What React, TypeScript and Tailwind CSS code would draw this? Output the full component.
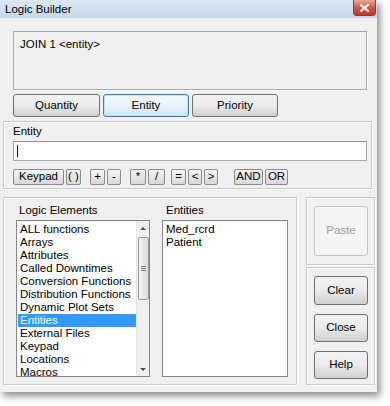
import React from "react";

const logicItems = [
  "ALL functions",
  "Arrays",
  "Attributes",
  "Called Downtimes",
  "Conversion Functions",
  "Distribution Functions",
  "Dynamic Plot Sets",
  "Entities",
  "External Files",
  "Keypad",
  "Locations",
  "Macros",
];

const entityItems = ["Med_rcrd", "Patient"];

// small keypad buttons: label, width, left gap
const keys: { label: string; w: string; ml: string }[] = [
  { label: "Keypad", w: "w-[51px]", ml: "ml-0" },
  { label: "( )", w: "w-[15px]", ml: "ml-[2px]" },
  { label: "+", w: "w-[15px]", ml: "ml-[9px]" },
  { label: "-", w: "w-[14px]", ml: "ml-[2px]" },
  { label: "*", w: "w-[16px]", ml: "ml-[9px]" },
  { label: "/", w: "w-[17px]", ml: "ml-[2px]" },
  { label: "=", w: "w-[15px]", ml: "ml-[6px]" },
  { label: "<", w: "w-[14px]", ml: "ml-[2px]" },
  { label: ">", w: "w-[14px]", ml: "ml-[2px]" },
  { label: "AND", w: "w-[29px]", ml: "ml-[16px]" },
  { label: "OR", w: "w-[23px]", ml: "ml-[2px]" },
];

const btn =
  "flex items-center justify-center border border-[#707070] rounded-[3px] bg-gradient-to-b from-[#f2f2f2] via-[#ebebeb] to-[#cfcfcf] text-black";

const etched = "border border-[#c9c9c9] shadow-[inset_1px_1px_0_#ffffff,1px_1px_0_#ffffff]";

function ScrollBar() {
  return (
    <div className="w-[13px] h-full flex flex-col items-center bg-[#f0f0f0] border-l border-[#e6e6e6]">
      <div className="h-[14px] w-full flex items-center justify-center">
        <div className="w-0 h-0 border-l-[3px] border-r-[3px] border-b-[3px] border-l-transparent border-r-transparent border-b-[#4d4d4d]" />
      </div>
      <div className="mt-[2px] h-[63px] w-[11px] rounded-[2px] border border-[#9a9a9a] bg-gradient-to-r from-[#f4f4f4] to-[#dcdcdc] flex flex-col items-center justify-center gap-[1px]">
        <div className="w-[5px] h-px bg-[#7a7a7a]" />
        <div className="w-[5px] h-px bg-[#7a7a7a]" />
        <div className="w-[5px] h-px bg-[#7a7a7a]" />
      </div>
      <div className="flex-1" />
      <div className="h-[14px] w-full flex items-center justify-center">
        <div className="w-0 h-0 border-l-[3px] border-r-[3px] border-t-[3px] border-l-transparent border-r-transparent border-t-[#4d4d4d]" />
      </div>
    </div>
  );
}

export default function App() {
  return (
    <div className="w-[390px] h-[406px] bg-white font-['Liberation_Sans',Arial,sans-serif] text-[11.5px] text-black leading-none">
      <div className="w-[377px] h-[392px] bg-[#f0f0f0] shadow-[3px_4px_7px_rgba(0,0,0,0.45)] flex flex-col">
        {/* Title bar */}
        <div className="h-[18px] bg-gradient-to-b from-[#dde8f5] to-[#c5d7ec] flex items-start justify-between">
          <span className="pl-[5px] pt-[4px] text-[11.5px]">Logic Builder</span>
          <div className="mr-[1px] w-[23px] h-[16px] rounded-b-[4px] border border-t-0 border-[#8e3a30] bg-gradient-to-b from-[#e9a99c] via-[#d0594b] to-[#c2392b] flex items-center justify-center">
            <svg width="9" height="8" viewBox="0 0 9 8">
              <path d="M1 1 L8 7 M8 1 L1 7" stroke="#ffffff" strokeWidth="2" strokeLinecap="square" />
            </svg>
          </div>
        </div>

        {/* Logic text and tabs */}
        <div className="pl-[13px] pt-[13px]">
          <div className="w-[354px] h-[59px] border border-[#a8a8a8] shadow-[1px_1px_0_#ffffff] bg-[#f0f0f0] px-[6px] pt-[7px]">
            JOIN 1 &lt;entity&gt;
          </div>
          <div className="mt-[4px] flex gap-[3px] h-[23px]">
            <div className={`${btn} w-[87px]`}>Quantity</div>
            <div className="w-[86px] flex items-center justify-center border border-[#3c7fb1] rounded-[3px] bg-gradient-to-b from-[#f3f9fd] via-[#e6f2fb] to-[#cfe6f6] shadow-[inset_0_0_0_1px_#bfe2f7]">
              Entity
            </div>
            <div className={`${btn} w-[86px]`}>Priority</div>
          </div>
        </div>

        {/* Entity input section */}
        <div className={`mt-[4px] ml-[3px] w-[369px] h-[68px] ${etched} pl-[9px] pt-[4px]`}>
          <div className="h-[14px]">Entity</div>
          <div className="mt-[1px] w-[354px] h-[20px] bg-white border border-[#abadb3] border-t-[#8e8f8f] flex items-center pl-[3px]">
            <div className="w-px h-[12px] bg-black" />
          </div>
          <div className="mt-[8px] flex h-[16px]">
            {keys.map((k) => (
              <div
                key={k.label}
                className={`${k.w} ${k.ml} flex items-center justify-center border border-[#8a8a8a] rounded-[2px] bg-gradient-to-b from-[#f6f6f6] to-[#d8d8d8]`}
              >
                {k.label}
              </div>
            ))}
          </div>
        </div>

        {/* Lists and action buttons */}
        <div className="mt-[8px] ml-[3px] flex gap-[9px]">
          <div className={`w-[294px] h-[188px] ${etched} pl-[12px] pt-[7px] flex gap-[12px]`}>
            <div className="flex flex-col">
              <div className="h-[15px] pl-[3px]">Logic Elements</div>
              <div className="w-[134px] h-[157px] bg-white border border-[#828790] flex">
                <div className="flex-1 pt-[2px] pl-px overflow-hidden">
                  {logicItems.map((it) => (
                    <div
                      key={it}
                      className={`h-[13px] leading-[13px] pl-[2px] whitespace-nowrap ${
                        it === "Entities" ? "bg-[#3399ff] text-white" : ""
                      }`}
                    >
                      {it}
                    </div>
                  ))}
                </div>
                <ScrollBar />
              </div>
            </div>
            <div className="flex flex-col">
              <div className="h-[15px] pl-[4px]">Entities</div>
              <div className="w-[126px] h-[157px] bg-white border border-[#828790] pt-[2px] pl-[3px]">
                {entityItems.map((it) => (
                  <div key={it} className="h-[13px] leading-[13px]">
                    {it}
                  </div>
                ))}
              </div>
            </div>
          </div>

          <div className="flex flex-col gap-[2px]">
            <div className={`w-[69px] h-[68px] ${etched} pl-[7px] pt-[8px]`}>
              <div className="w-[54px] h-[50px] flex items-center justify-center border border-[#c4c4c4] rounded-[3px] bg-[#f4f4f4] text-[#9d9d9d]">
                Paste
              </div>
            </div>
            <div className={`w-[69px] h-[118px] ${etched} pl-[7px] pt-[8px] flex flex-col gap-[9px]`}>
              <div className={`${btn} w-[54px] h-[29px]`}>Clear</div>
              <div className={`${btn} w-[54px] h-[28px]`}>Close</div>
              <div className={`${btn} w-[54px] h-[28px]`}>Help</div>
            </div>
          </div>
        </div>
      </div>
    </div>
  );
}
